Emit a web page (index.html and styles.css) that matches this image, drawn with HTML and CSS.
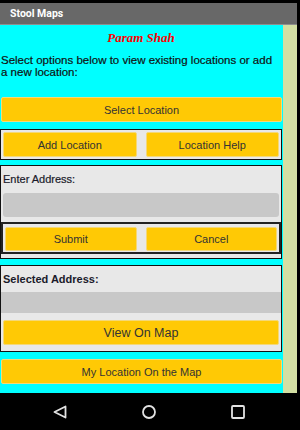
FILE: index.html
```html
<!DOCTYPE html>
<html lang="en">
<head>
  <meta charset="UTF-8" />
  <meta name="viewport" content="width=device-width, initial-scale=1.0"/>
  <title>Stool Maps</title>
  <link rel="stylesheet" href="styles.css">
</head>
<body>
  <div class="device">
    <div class="statusbar"></div>
    <div class="appbar">Stool Maps</div>

    <div class="screen">
      <div class="panel">
        <div class="author">Param Shah</div>
        <p class="intro">Select options below to view existing locations or add a new location:</p>

        <button class="btn btn-wide">Select Location</button>

        <div class="box">
          <div class="row">
            <button class="btn">Add Location</button>
            <button class="btn">Location Help</button>
          </div>
        </div>

        <div class="box box-form">
          <label class="label" for="address">Enter Address:</label>
          <input class="field" id="address" type="text">
          <div class="row row-framed">
            <button class="btn btn-short">Submit</button>
            <button class="btn btn-short">Cancel</button>
          </div>
        </div>

        <div class="box box-selected">
          <div class="label label-bold">Selected Address:</div>
          <div class="readout"></div>
          <button class="btn btn-map">View On Map</button>
        </div>

        <button class="btn btn-wide btn-last">My Location On the Map</button>
      </div>
      <div class="scroll-edge"></div>
    </div>

    <nav class="navbar">
      <svg width="14" height="14" viewBox="0 0 14 14">
        <path d="M12.5 1.5 L1.5 7 L12.5 12.5 Z" fill="none" stroke="#e2e2e2" stroke-width="1.8" stroke-linejoin="round"/>
      </svg>
      <svg width="14" height="14" viewBox="0 0 14 14">
        <circle cx="7" cy="7" r="6" fill="none" stroke="#e2e2e2" stroke-width="1.8"/>
      </svg>
      <svg width="14" height="14" viewBox="0 0 14 14">
        <rect x="1" y="1" width="12" height="12" rx="1" fill="none" stroke="#e2e2e2" stroke-width="1.8"/>
      </svg>
    </nav>
  </div>
</body>
</html>
```

FILE: styles.css
```css
html, body {
  margin: 0;
  padding: 0;
  background-color: #000;
  height: 100%;
  font-family: "Liberation Sans", Arial, sans-serif;
}

.device {
  width: 300px;
  height: 430px;
  display: flex;
  flex-direction: column;
}

.statusbar {
  height: 3px;
  background: #000;
}

.appbar {
  height: 21px;
  margin-right: 3px;
  padding-left: 10px;
  background: #686868;
  border-bottom: 1px solid #8e8e8e;
  color: #fff;
  font-family: Roboto, Arial, sans-serif;
  font-size: 10.5px;
  font-weight: bold;
  line-height: 21px;
}

.screen {
  display: flex;
  height: 368px;
  margin-right: 3px;
}

.panel {
  width: 282px;
  padding-right: 1px;
  background: #00ffff;
}

.scroll-edge {
  flex: 1;
  background: #d3dfa3;
}

.author {
  padding-top: 5px;
  height: 16px;
  line-height: 16px;
  text-align: center;
  color: #ff0000;
  font-family: "Liberation Serif", serif;
  font-style: italic;
  font-weight: bold;
  font-size: 13px;
}

.intro {
  margin: 8px 5px 0 1px;
  font-size: 11.5px;
  line-height: 12px;
  color: #111;
  -webkit-text-stroke: 0.2px #111;
}

.btn {
  display: block;
  height: 25px;
  padding: 0;
  background: #ffc905;
  border: 1px solid #f4d877;
  border-radius: 2px;
  color: #333;
  font-family: "Liberation Sans", Arial, sans-serif;
  font-size: 11px;
}

.btn-wide {
  width: 281px;
  margin: 19px 0 0 1px;
}

.btn-last {
  margin-top: 7px;
}

.box {
  margin-top: 7px;
  padding: 2px;
  background: #e8e8e8;
  border: 1px solid #111;
}

.row {
  display: flex;
  gap: 9px;
}

.row .btn {
  flex: 1;
}

.box-form {
  margin-top: 5px;
  padding: 0 0 4px 0;
}

.label {
  display: block;
  margin: 7px 0 0 2px;
  font-size: 11px;
  line-height: 12px;
  color: #1a1a2a;
  -webkit-text-stroke: 0.2px #1a1a2a;
}

.label-bold {
  font-weight: bold;
  -webkit-text-stroke: 0;
}

.field {
  display: block;
  box-sizing: border-box;
  width: 276px;
  height: 24px;
  margin: 8px 0 0 2px;
  background: #c8c8c8;
  border: none;
  border-radius: 3px;
}

.row-framed {
  margin-top: 5px;
  padding: 3px 2px 1px 2px;
  border: 2px solid #222;
}

.btn-short {
  height: 24px;
}

.box-selected {
  margin-top: 6px;
  padding: 0 0 6px 0;
}

.readout {
  height: 21px;
  margin-top: 7px;
  background: #c8c8c8;
}

.btn-map {
  width: 276px;
  margin: 7px 0 0 2px;
  font-size: 12.5px;
}

.navbar {
  flex: 1;
  display: flex;
  align-items: center;
  justify-content: center;
  gap: 75px;
  padding-right: 2px;
  background: #000;
}
```
